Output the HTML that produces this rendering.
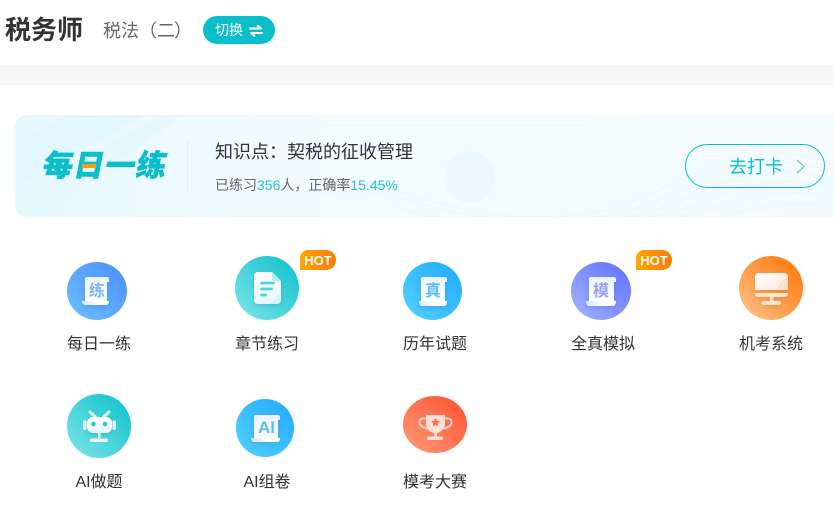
<!DOCTYPE html>
<html lang="zh"><head><meta charset="utf-8">
<style>
html,body{margin:0;padding:0;background:#fff;width:834px;height:511px;overflow:hidden}
body{position:relative;font-family:"Liberation Sans","Noto Sans CJK SC",sans-serif;color:#333}
.a{position:absolute;white-space:nowrap}
.l{position:absolute;white-space:nowrap;font-size:16px;line-height:24px;color:#333;text-align:center;width:100px}
.hot{position:absolute;width:36px;height:20px;border-radius:8px 10px 10px 0;background:linear-gradient(90deg,#ffa800,#ff7a00);color:#fff;font:bold 13px/21px "Liberation Sans",sans-serif;text-align:center}
svg{position:absolute;left:0;top:0}
.sh{filter:drop-shadow(0 2px 2px rgba(30,80,160,.18))}
</style></head><body>
<div class="a" style="left:5px;top:11px;font-size:26px;line-height:38px;font-weight:700;color:#333">税务师</div>
<div class="a" style="left:103px;top:17px;font-size:18px;line-height:28px;color:#666">税法（<span style="letter-spacing:-1px">二</span>）</div>
<div class="a" style="left:203px;top:16px;width:72px;height:28px;border-radius:14px;background:#0abfca"></div>
<div class="a" style="left:215px;top:20px;font-size:14px;line-height:20px;color:#fff">切换</div>
<div class="a" style="left:0;top:65px;width:834px;height:20px;background:#f7f7f7"></div>

<div class="a" style="left:15px;top:115px;width:819px;height:102px;border-radius:12px 0 0 12px;overflow:hidden;background:#f2fbff">
<svg width="819" height="102" viewBox="0 0 819 102" fill="none">
<defs><linearGradient id="bn" x1="0" y1="0" x2="1" y2="0"><stop offset="0" stop-color="#e6f8ff"/><stop offset=".22" stop-color="#eefaff"/><stop offset=".4" stop-color="#f2fbff"/><stop offset="1" stop-color="#f3fbff"/></linearGradient></defs>
<rect width="819" height="102" fill="url(#bn)"/>
<path d="M0 28L50 0H130L0 72Z" fill="#e0f6ff" opacity=".7"/>
<path d="M0 85L145 0H170L20 102H0Z" fill="#e2f7ff" opacity=".55"/>
<circle cx="455" cy="62" r="25.500" fill="#ebf8ff"/>
<g stroke="#ebf8fd" stroke-width="1">
<path d="M200 102C260 70 340 62 390 78C460 102 560 120 650 72C720 36 770 30 819 50"/>
<path d="M230 102C280 76 340 70 390 84C460 106 560 124 660 78C730 44 770 40 819 58"/>
<path d="M380 92C460 116 570 126 670 84C730 54 775 50 819 66"/>
<path d="M400 102C480 114 590 122 680 90C735 66 780 60 819 74"/>
<path d="M380 130C500 130 610 120 700 92C745 78 785 72 819 84"/>
<path d="M395 128C500 135 630 122 720 98C760 88 790 86 819 92"/>
<path d="M405 132C520 137 650 124 735 106C770 100 795 98 819 100"/>
</g>
</svg>
</div>
<div class="a" style="left:43px;top:146px;font-size:30px;line-height:42px;font-weight:900;color:#0abfca;letter-spacing:1.200px;-webkit-text-stroke:.5px #0abfca;transform:skewX(-11deg)">每日一练</div>
<div class="a" style="left:82px;top:164px;width:14px;height:4px;background:#ff9d0a"></div>
<div class="a" style="left:187px;top:141px;width:1px;height:52px;background:#ddf0f6"></div>
<div class="a" style="left:215px;top:139px;font-size:18px;line-height:27px;color:#333">知识点：契税的征收管理</div>
<div class="a" style="left:215px;top:175px;font-size:14px;line-height:20px;color:#666">已练习<span style="color:#27c1cb">356</span>人，正确率<span style="color:#27c1cb">15.45%</span></div>
<div class="a" style="left:685px;top:144px;width:138px;height:42px;border:1px solid #0abfca;border-radius:22px"></div>
<div class="a" style="left:729px;top:154px;font-size:18px;line-height:27px;color:#0abfca">去打卡</div>

<svg width="834" height="511" viewBox="0 0 834 511" fill="none">
<defs>
<linearGradient id="g1" x1="1" y1="0" x2="0" y2="1"><stop offset="0" stop-color="#4d8dff"/><stop offset="1" stop-color="#6cc0ff"/></linearGradient>
<linearGradient id="g2" x1="1" y1="0" x2="0" y2="1"><stop offset="0" stop-color="#0cc0ca"/><stop offset="1" stop-color="#7fe6ea"/></linearGradient>
<linearGradient id="g3" x1="1" y1="0" x2="0" y2="1"><stop offset="0" stop-color="#22a9ff"/><stop offset="1" stop-color="#52d2ff"/></linearGradient>
<linearGradient id="g4" x1="1" y1="0" x2="0" y2="1"><stop offset="0" stop-color="#5f6dff"/><stop offset="1" stop-color="#a5b6ff"/></linearGradient>
<linearGradient id="g5" x1="1" y1="0" x2="0" y2="1"><stop offset="0" stop-color="#ff7300"/><stop offset="1" stop-color="#ffc48f"/></linearGradient>
<linearGradient id="g6" x1="1" y1="0" x2="0" y2="1"><stop offset="0" stop-color="#ff4f2e"/><stop offset="1" stop-color="#ff9c7a"/></linearGradient>
<linearGradient id="p" x1="0" y1="0" x2="0" y2="1"><stop offset="0" stop-color="#eaf4ff"/><stop offset="1" stop-color="#fdfeff"/></linearGradient>
<linearGradient id="c" x1="0" y1="0" x2="1" y2="0"><stop offset="0" stop-color="#d8e9ff"/><stop offset=".6" stop-color="#fff"/><stop offset="1" stop-color="#fff"/></linearGradient>
<linearGradient id="po" x1="0" y1="0" x2="1" y2="1"><stop offset="0" stop-color="#fff"/><stop offset="1" stop-color="#ffe9db"/></linearGradient>
<linearGradient id="pt" x1="0" y1="0" x2="0" y2="1"><stop offset="0" stop-color="#fff"/><stop offset="1" stop-color="#e4f8fa"/></linearGradient>
</defs>
<!-- switch icon -->
<path d="M250 28.500H261L257.800 25.800M262 33H251L254.200 35.700" stroke="#fff" stroke-width="2" stroke-linecap="round" stroke-linejoin="round"/>
<!-- chevron -->
<path d="M797 160L804 166.500L797 173" stroke="#7cc6cd" stroke-width="1.200"/>

<!-- 每日一练 -->
<ellipse cx="97" cy="291" rx="30" ry="29" fill="url(#g1)"/>
<g class="sh">
<path d="M87 277H107a2 2 0 0 1 2 2v3h-2V301H85V279a2 2 0 0 1 2-2Z" fill="url(#p)"/>
<path d="M82 301h27c0 2-1 4-3 4H85c-2 0-3-2-3-4Z" fill="url(#c)"/>
</g>
<text x="89" y="296" font-size="16" font-weight="700" fill="#82b2f7" font-family="'Liberation Sans','Noto Sans CJK SC',sans-serif">练</text>

<!-- 章节练习 -->
<circle cx="267" cy="288" r="32" fill="url(#g2)"/>
<g class="sh">
<path d="M258 272h14l9 9v19a4 4 0 0 1-4 4h-19a4 4 0 0 1-4-4v-24a4 4 0 0 1 4-4Z" fill="url(#pt)"/>
</g>
<path d="M272 272l9 9h-7a2 2 0 0 1-2-2Z" fill="#b5eef0"/>
<path d="M281 293v7a4 4 0 0 1-4 4h-7Z" fill="#c4eff2" opacity=".7"/>
<path d="M261.500 283h12M261.500 289h10M261.500 295h4" stroke="#4fd3da" stroke-width="2.800" stroke-linecap="round"/>

<!-- 历年试题 -->
<ellipse cx="432.500" cy="291" rx="29.500" ry="29" fill="url(#g3)"/>
<g class="sh">
<path d="M423 277H445a2 2 0 0 1 2 2v3h-2V301H421V279a2 2 0 0 1 2-2Z" fill="url(#p)"/>
<path d="M419 301h28c0 3-1 5-3 5H422c-2 0-3-2-3-5Z" fill="url(#c)"/>
</g>
<text x="425" y="296" font-size="16" font-weight="700" fill="#62bbf8" font-family="'Liberation Sans','Noto Sans CJK SC',sans-serif">真</text>

<!-- 全真模拟 -->
<ellipse cx="601" cy="291" rx="30" ry="29" fill="url(#g4)"/>
<g class="sh">
<path d="M591 277H614a2 2 0 0 1 2 2v3h-2V301H589V279a2 2 0 0 1 2-2Z" fill="url(#p)"/>
<path d="M586 301h30c0 3-1 5-3 5H589c-2 0-3-2-3-5Z" fill="url(#c)"/>
</g>
<text x="593" y="296" font-size="16" font-weight="700" fill="#989ff0" font-family="'Liberation Sans','Noto Sans CJK SC',sans-serif">模</text>

<!-- 机考系统 -->
<circle cx="771" cy="288" r="32" fill="url(#g5)"/>
<g style="filter:drop-shadow(0 2px 2px rgba(200,90,0,.25))">
<path d="M759 273h25a4 4 0 0 1 4 4v13h-33v-13a4 4 0 0 1 4-4Z" fill="url(#po)"/>
<path d="M788 277v13h-12l11-15.500a4 4 0 0 1 1 2.500Z" fill="#ffd9c0" opacity=".7"/>
<path d="M755 293h33v1a3 3 0 0 1-3 3h-27a3 3 0 0 1-3-3Z" fill="#ffe4d2"/>
<rect x="770" y="297" width="3.500" height="5" fill="#ffe4d2"/>
<rect x="762" y="301" width="19" height="4" rx="2" fill="#ffe4d2"/>
</g>

<!-- AI做题 -->
<circle cx="99" cy="426" r="32" fill="url(#g2)"/>
<path d="M90 412l5.500 5M109 412l-5.500 5" stroke="#d9f7f9" stroke-width="3" stroke-linecap="round"/>
<g class="sh"><rect x="87" y="417" width="25" height="16" rx="6" fill="url(#pt)"/></g>
<rect x="83" y="420.500" width="3.500" height="9.500" rx="1.500" fill="#e0f8fa"/>
<rect x="112.500" y="420.500" width="3.500" height="9.500" rx="1.500" fill="#e0f8fa"/>
<circle cx="93.500" cy="424" r="2.300" fill="#2cc6cf"/><circle cx="105" cy="424" r="2.300" fill="#2cc6cf"/>
<rect x="98" y="433" width="2.500" height="6" fill="#dff7fa"/>
<rect x="90" y="438.500" width="18" height="3.500" rx="1.700" fill="#e8fbfc"/>

<!-- AI组卷 -->
<ellipse cx="265" cy="428" rx="29" ry="29" fill="url(#g3)"/>
<g class="sh">
<path d="M256 415H278a2 2 0 0 1 2 2v3h-2V438H254V417a2 2 0 0 1 2-2Z" fill="url(#p)"/>
<path d="M251 438h29c0 3-1 4-3 4H254c-2 0-3-2-3-4Z" fill="url(#c)"/>
</g>
<text x="258" y="433" font-size="17" font-weight="700" fill="#62bbf8" font-family="'Liberation Sans',sans-serif">AI</text>

<!-- 模考大赛 -->
<ellipse cx="435" cy="424.500" rx="32" ry="28.500" fill="url(#g6)"/>
<path d="M426 418.500h-3a3.500 3.500 0 0 0-3.500 3.500c0 3.500 3.500 6 8 6.500M445 418.500h3a3.500 3.500 0 0 1 3.500 3.500c0 3.500-3.500 6-8 6.500" stroke="#ffcfc0" stroke-width="2.200"/>
<path d="M426 415h19v8c0 6-4 10-9.500 10s-9.500-4-9.500-10Z" fill="#ffe0d6"/>
<path d="M435.500 418l1.300 2.700 3 .4-2.200 2.100.5 3-2.600-1.400-2.600 1.400.5-3-2.200-2.100 3-.4Z" fill="#ff6a48"/>
<rect x="434" y="432" width="3" height="5" fill="#ffd9cd"/>
<rect x="427" y="436.500" width="16" height="3.500" rx="1.500" fill="#ffe0d6"/>
</svg>

<div class="hot" style="left:300px;top:250px">HOT</div>
<div class="hot" style="left:636px;top:250px">HOT</div>

<div class="l" style="left:49px;top:333px">每日一练</div>
<div class="l" style="left:217px;top:333px">章节练习</div>
<div class="l" style="left:385px;top:333px">历年试题</div>
<div class="l" style="left:553px;top:333px">全真模拟</div>
<div class="l" style="left:721px;top:333px">机考系统</div>
<div class="l" style="left:49px;top:471px">AI做题</div>
<div class="l" style="left:217px;top:471px">AI组卷</div>
<div class="l" style="left:385px;top:471px">模考大赛</div>
</body></html>
